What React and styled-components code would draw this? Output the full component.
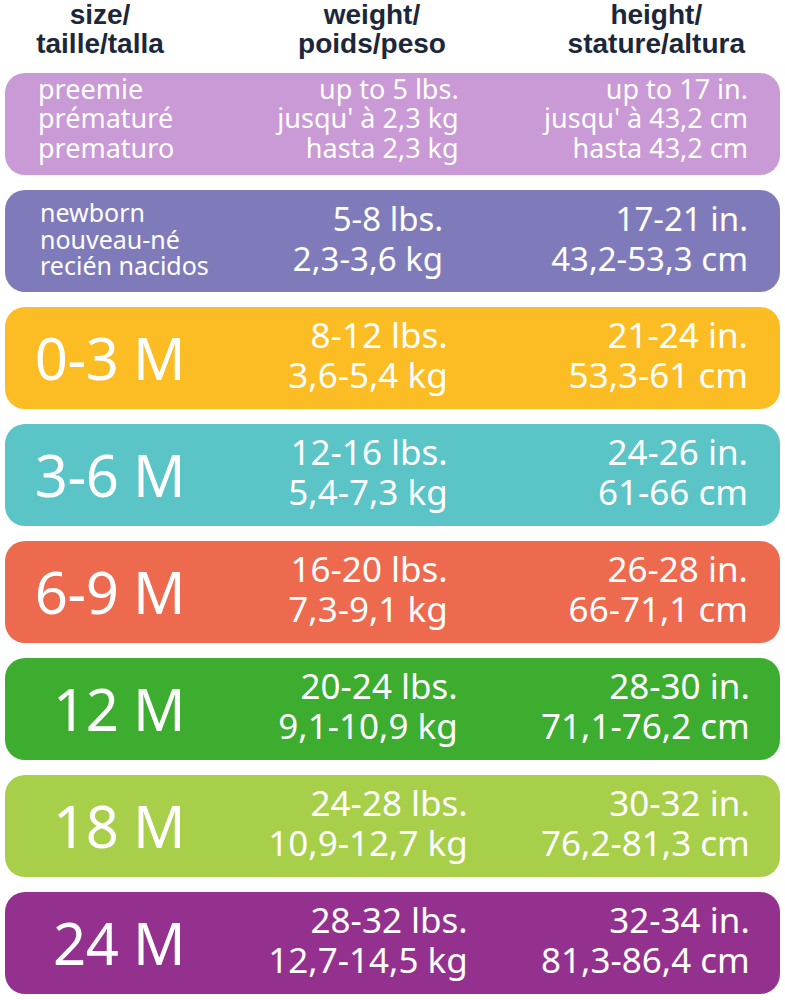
import React from "react";
import styled, { createGlobalStyle } from "styled-components";

const GlobalStyle = createGlobalStyle`
  body {
    margin: 0;
    background: #ffffff;
  }
`;

const Chart = styled.div`
  width: 785px;
  box-sizing: border-box;
  padding: 0 5px;
  display: flex;
  flex-direction: column;
  gap: 15px;
`;

const HeaderRow = styled.div`
  display: grid;
  grid-template-columns: 190px 346px 1fr;
  font-family: "Liberation Sans", Arial, sans-serif;
  font-weight: bold;
  font-size: 28px;
  line-height: 29px;
  color: #1b273a;
`;

const HeadCell = styled.div`
  text-align: ${(p) => p.$align || "center"};
  padding-left: ${(p) => p.$padLeft || 0}px;
  padding-right: ${(p) => p.$padRight || 0}px;
`;

const HeadBlock = styled.div`
  display: inline-block;
  text-align: center;
`;

const Row = styled.div`
  display: grid;
  grid-template-columns: 190px 346px 1fr;
  align-items: center;
  height: 102px;
  border-radius: 20px;
  background: ${(p) => p.$bg};
  color: #ffffff;
  font-family: "Noto Sans", "Open Sans", sans-serif;
`;

const SizeCell = styled.div`
  text-align: ${(p) => (p.$big ? "right" : "left")};
  padding-left: ${(p) => (p.$big ? 0 : p.$indent)}px;
  padding-right: ${(p) => (p.$big ? 10 : 0)}px;
  white-space: nowrap;
`;

const BigLabel = styled.div`
  font-size: 58px;
  line-height: 70px;
  letter-spacing: -0.5px;
`;

const Lines = styled.div`
  display: inline-block;
  font-size: ${(p) => p.$size}px;
  line-height: ${(p) => p.$lh}px;
  margin-bottom: ${(p) => p.$lift}px;
  white-space: nowrap;
`;

const ValueCell = styled.div`
  display: flex;
  justify-content: ${(p) => (p.$end ? "flex-end" : "center")};
  padding-right: ${(p) => (p.$end ? 32 : 0)}px;
  text-align: right;
`;

const textStyles = {
  preemie: {
    size: { size: 27, lh: 29.5, lift: 12 },
    value: { size: 27, lh: 29.5, lift: 12 },
  },
  newborn: {
    size: { size: 25, lh: 26.5, lift: 4 },
    value: { size: 33, lh: 40, lift: 4 },
  },
  month: {
    value: { size: 35, lh: 40, lift: 6 },
  },
};

const rows = [
  {
    bg: "#c99ad5",
    kind: "preemie",
    indent: 33,
    size: ["preemie", "prématuré", "prematuro"],
    weight: ["up to 5 lbs.", "jusqu' à 2,3 kg", "hasta 2,3 kg"],
    height: ["up to 17 in.", "jusqu' à 43,2 cm", "hasta 43,2 cm"],
  },
  {
    bg: "#7f7bba",
    kind: "newborn",
    indent: 35,
    size: ["newborn", "nouveau-né", "recién nacidos"],
    weight: ["5-8 lbs.", "2,3-3,6 kg"],
    height: ["17-21 in.", "43,2-53,3 cm"],
  },
  {
    bg: "#fcbd24",
    kind: "month",
    label: "0-3 M",
    weight: ["8-12 lbs.", "3,6-5,4 kg"],
    height: ["21-24 in.", "53,3-61 cm"],
  },
  {
    bg: "#5ac4c7",
    kind: "month",
    label: "3-6 M",
    weight: ["12-16 lbs.", "5,4-7,3 kg"],
    height: ["24-26 in.", "61-66 cm"],
  },
  {
    bg: "#ed6a4f",
    kind: "month",
    label: "6-9 M",
    weight: ["16-20 lbs.", "7,3-9,1 kg"],
    height: ["26-28 in.", "66-71,1 cm"],
  },
  {
    bg: "#3cad2f",
    kind: "month",
    label: "12 M",
    weight: ["20-24 lbs.", "9,1-10,9 kg"],
    height: ["28-30 in.", "71,1-76,2 cm"],
  },
  {
    bg: "#a7cf4a",
    kind: "month",
    label: "18 M",
    weight: ["24-28 lbs.", "10,9-12,7 kg"],
    height: ["30-32 in.", "76,2-81,3 cm"],
  },
  {
    bg: "#94318e",
    kind: "month",
    label: "24 M",
    weight: ["28-32 lbs.", "12,7-14,5 kg"],
    height: ["32-34 in.", "81,3-86,4 cm"],
  },
];

const TextLines = ({ lines, style }) => (
  <Lines $size={style.size} $lh={style.lh} $lift={style.lift}>
    {lines.map((line) => (
      <div key={line}>{line}</div>
    ))}
  </Lines>
);

const SizeRow = ({ row }) => {
  const styles = textStyles[row.kind];
  return (
    <Row $bg={row.bg}>
      {row.label ? (
        <SizeCell $big>
          <BigLabel>{row.label}</BigLabel>
        </SizeCell>
      ) : (
        <SizeCell $indent={row.indent}>
          <TextLines lines={row.size} style={styles.size} />
        </SizeCell>
      )}
      <ValueCell>
        <TextLines lines={row.weight} style={styles.value} />
      </ValueCell>
      <ValueCell $end>
        <TextLines lines={row.height} style={styles.value} />
      </ValueCell>
    </Row>
  );
};

export default function App() {
  return (
    <>
      <GlobalStyle />
      <Chart>
        <HeaderRow>
          <HeadCell>
            size/
            <br />
            taille/talla
          </HeadCell>
          <HeadCell $padLeft={8}>
            weight/
            <br />
            poids/peso
          </HeadCell>
          <HeadCell $align="right" $padRight={35}>
            <HeadBlock>
              height/
              <br />
              stature/altura
            </HeadBlock>
          </HeadCell>
        </HeaderRow>
        {rows.map((row) => (
          <SizeRow key={row.bg} row={row} />
        ))}
      </Chart>
    </>
  );
}
